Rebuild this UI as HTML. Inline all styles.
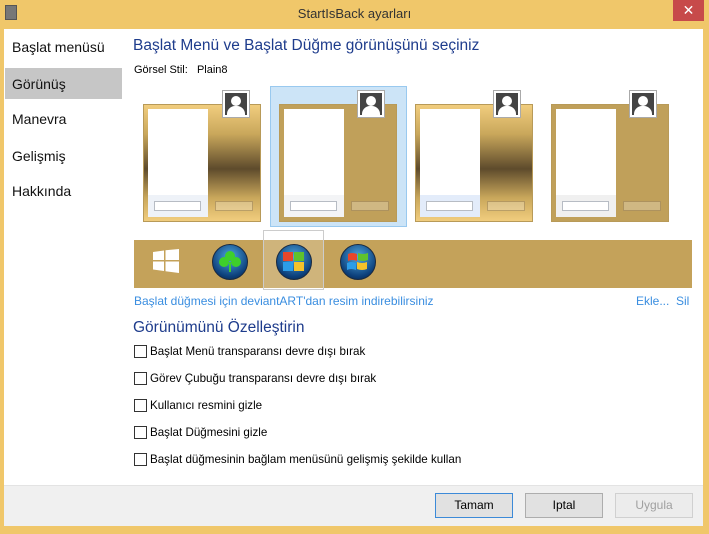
<!DOCTYPE html>
<html><head><meta charset="utf-8"><style>
*{margin:0;padding:0;box-sizing:border-box}
body{width:709px;height:534px;background:#f0c76a;font-family:"Liberation Sans",sans-serif;font-size:12px;color:#000;position:relative;overflow:hidden}
.a{position:absolute}
.title{left:0;top:6px;width:709px;text-align:center;font-size:13px;color:#333}
.close{left:673px;top:0;width:31px;height:21px;background:#c74a4a;color:#fff;text-align:center;font-size:14px;line-height:20px}
.win{left:4px;top:29px;width:699px;height:497px;background:#fff}
.foot{left:4px;top:485px;width:699px;height:41px;background:#f0f0f0;border-top:1px solid #e3e3e3}
.nav{left:12px;font-size:14px;color:#111}
.sel{left:5px;top:68px;width:117px;height:31px;background:#c6c6c6}
.h{color:#1e3c8c;font-size:15.5px}
.card{width:118px;height:118px;border:1px solid #b89a58}
.g{background:linear-gradient(to bottom,#f1cd7e 0%,#c9a75b 25%,#5e4b2c 55%,#c9a75b 80%,#f1cd7e 100%)}
.f{background:#c0a05a}
.panel{background:#fff}
.low{background:#eef2f8}
.srch{background:#fff;border:1px solid #b7bcc4;height:10px}
.av{width:28px;height:28px;background:#fff;border:1px solid #aaa;padding:2px}
.av div{width:100%;height:100%;background:#444;position:relative;overflow:hidden}
.av div:before{content:"";position:absolute;left:6px;top:3px;width:10px;height:10px;border-radius:50%;background:#fff}
.av div:after{content:"";position:absolute;left:2px;top:13px;width:18px;height:14px;border-radius:8px 8px 0 0;background:#fff}
.btnp{background:rgba(255,255,255,.25);border:1px solid rgba(120,90,40,.4);height:10px}
.orb{width:36px;height:36px;border-radius:50%;background:radial-gradient(circle at 50% 35%,#4fa8e0,#0c3f7a 70%,#06203f);border:1px solid #1a2a40}
.cb{left:134px;width:13px;height:13px;border:1px solid #333;background:#fff}
.cl{left:150px;font-size:11.6px}
.btn{top:493px;width:78px;height:25px;border:1px solid #adadad;background:#e1e1e1;text-align:center;line-height:23px;font-size:12px}
</style></head><body>
<div class="a" style="left:5px;top:5px;width:12px;height:15px;background:#777;border:1px solid #555"></div>
<div class="a title">StartIsBack ayarları</div>
<div class="a close">✕</div>
<div class="a win"></div>
<div class="a foot"></div>
<div class="a sel"></div>
<div class="a nav" style="top:39px">Başlat menüsü</div>
<div class="a nav" style="top:76px">Görünüş</div>
<div class="a nav" style="top:111px">Manevra</div>
<div class="a nav" style="top:148px">Gelişmiş</div>
<div class="a nav" style="top:183px">Hakkında</div>
<div class="a h" style="left:133px;top:37px">Başlat Menü ve Başlat Düğme görünüşünü seçiniz</div>
<div class="a" style="left:134px;top:64px;font-size:11px">Görsel Stil: &nbsp; Plain8</div>

<div class="a" style="left:270px;top:86px;width:137px;height:141px;background:#cce4f7;border:1px solid #99c9ef"></div>

<div class="a card g" style="left:143px;top:104px"></div>
<div class="a card f" style="left:279px;top:104px"></div>
<div class="a card g" style="left:415px;top:104px"></div>
<div class="a card f" style="left:551px;top:104px"></div>

<div class="a panel" style="left:148px;top:109px;width:60px;height:108px"></div>
<div class="a panel" style="left:284px;top:109px;width:60px;height:108px"></div>
<div class="a panel" style="left:420px;top:109px;width:60px;height:108px"></div>
<div class="a panel" style="left:556px;top:109px;width:60px;height:108px"></div>
<div class="a low" style="left:148px;top:195px;width:60px;height:22px"></div>
<div class="a low" style="left:284px;top:195px;width:60px;height:22px;background:#f3f4f6"></div>
<div class="a low" style="left:420px;top:195px;width:60px;height:22px;background:#e3ecfa"></div>
<div class="a low" style="left:556px;top:195px;width:60px;height:22px;background:#f0f0f0"></div>
<div class="a srch" style="left:154px;top:201px;width:47px"></div>
<div class="a srch" style="left:290px;top:201px;width:47px"></div>
<div class="a srch" style="left:426px;top:201px;width:47px"></div>
<div class="a srch" style="left:562px;top:201px;width:47px"></div>
<div class="a btnp" style="left:215px;top:201px;width:38px"></div>
<div class="a btnp" style="left:351px;top:201px;width:38px"></div>
<div class="a btnp" style="left:487px;top:201px;width:38px"></div>
<div class="a btnp" style="left:623px;top:201px;width:38px"></div>

<div class="a av" style="left:222px;top:90px"><div></div></div>
<div class="a av" style="left:357px;top:90px"><div></div></div>
<div class="a av" style="left:493px;top:90px"><div></div></div>
<div class="a av" style="left:629px;top:90px"><div></div></div>

<div class="a" style="left:134px;top:240px;width:558px;height:48px;background:#c4a25a"></div>
<div class="a" style="left:263px;top:230px;width:61px;height:60px;border:1px solid #ccc;background:rgba(255,255,255,.2)"></div>
<svg class="a" style="left:153px;top:249px" width="26" height="24" viewBox="0 0 26 24"><path d="M0 3l11-1.5V11H0zM12.5 1.3L26 0v11H12.5zM0 12.5h11v9.5L0 20.5zM12.5 12.5H26V24l-13.5-1.8z" fill="#fff"/></svg>
<div class="a orb" style="left:212px;top:244px"></div>
<svg class="a" style="left:219px;top:250px" width="22" height="24" viewBox="0 0 22 24"><g fill="#3ecf2a"><circle cx="11" cy="6" r="5"/><circle cx="5" cy="12" r="5"/><circle cx="17" cy="12" r="5"/></g><path d="M11 12v10" stroke="#3ecf2a" stroke-width="2"/></svg>
<div class="a orb" style="left:276px;top:244px"></div>
<svg class="a" style="left:283px;top:252px" width="22" height="20" viewBox="0 0 22 20"><rect x="0" y="0" width="10" height="9" fill="#e8462a"/><rect x="11" y="0" width="10" height="9" fill="#5fc22c"/><rect x="0" y="10" width="10" height="9" fill="#2c9de8"/><rect x="11" y="10" width="10" height="9" fill="#f5c22a"/></svg>
<div class="a orb" style="left:340px;top:244px"></div>
<svg class="a" style="left:347px;top:252px" width="22" height="20" viewBox="0 0 22 20"><path d="M1 2q4-2 9 0v7q-5-2-9 0z" fill="#e8462a"/><path d="M11 1q5 2 10 0v7q-5 2-10 0z" fill="#5fc22c"/><path d="M0 11q4-2 9 0v7q-5-2-9 0z" fill="#2c9de8"/><path d="M10 10q5 2 10 0v7q-5 2-10 0z" fill="#f5c22a"/></svg>

<div class="a" style="left:134px;top:294px;color:#3a8ee0;font-size:12px">Başlat düğmesi için deviantART'dan resim indirebilirsiniz</div>
<div class="a" style="left:636px;top:294px;color:#3a8ee0;font-size:12px">Ekle... &nbsp;Sil</div>
<div class="a h" style="left:133px;top:319px">Görünümünü Özelleştirin</div>

<div class="a cb" style="top:345px"></div><div class="a cl" style="top:345px">Başlat Menü transparansı devre dışı bırak</div>
<div class="a cb" style="top:372px"></div><div class="a cl" style="top:372px">Görev Çubuğu transparansı devre dışı bırak</div>
<div class="a cb" style="top:399px"></div><div class="a cl" style="top:399px">Kullanıcı resmini gizle</div>
<div class="a cb" style="top:426px"></div><div class="a cl" style="top:426px">Başlat Düğmesini gizle</div>
<div class="a cb" style="top:453px"></div><div class="a cl" style="top:453px">Başlat düğmesinin bağlam menüsünü gelişmiş şekilde kullan</div>

<div class="a btn" style="left:435px;border-color:#3c8ad8">Tamam</div>
<div class="a btn" style="left:525px">Iptal</div>
<div class="a btn" style="left:615px;color:#a0a0a0;background:#ececec;border-color:#d0d0d0">Uygula</div>
</body></html>
